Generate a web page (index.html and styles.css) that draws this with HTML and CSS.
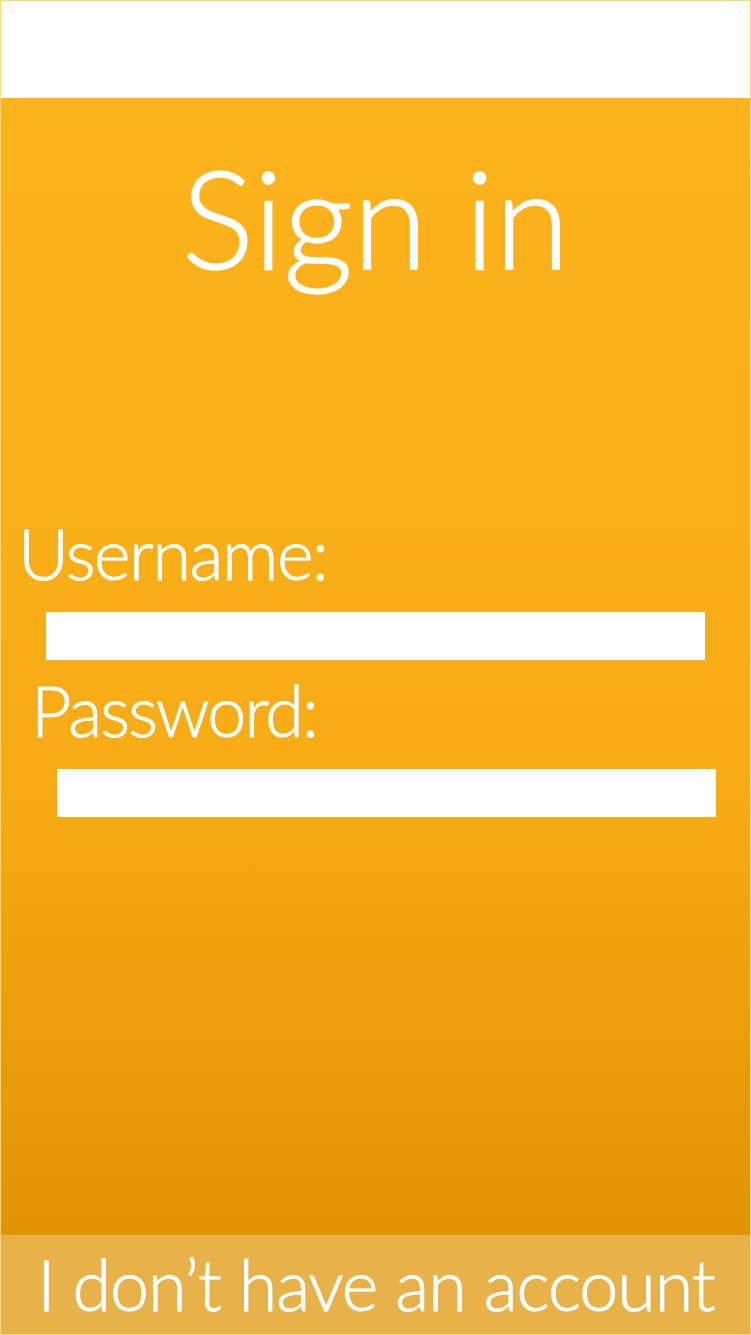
FILE: index.html
```html
<!DOCTYPE html>
<html lang="en">
<head>
<meta charset="utf-8">
<title>Sign in</title>
<link rel="stylesheet" href="styles.css">
</head>
<body>
<div class="frame">
  <header class="topbar"></header>
  <main class="panel">
    <h1 class="title">Sign in</h1>
    <form class="form">
      <label class="label label-user" for="user">Username:</label>
      <input class="field field-user" id="user" type="text">
      <label class="label label-pass" for="pass">Password:</label>
      <input class="field field-pass" id="pass" type="password">
    </form>
  </main>
  <footer class="footer">I don’t have an account</footer>
</div>
</body>
</html>
```

FILE: styles.css
```css
html, body {
  margin: 0;
  padding: 0;
  background: #ffffff;
}

.frame {
  box-sizing: border-box;
  width: 751px;
  height: 1335px;
  border: 1px solid #fdd67c;
  display: flex;
  flex-direction: column;
  font-family: "Lato", "Open Sans", sans-serif;
  font-weight: 300;
  color: #ffffff;
}

.topbar {
  height: 97px;
  background: #ffffff;
  flex: none;
}

.panel {
  flex: 1;
  display: flex;
  flex-direction: column;
  background: linear-gradient(to bottom, #fdb31b 0%, #f7ac16 60%, #e09400 100%);
}

.title {
  margin: 0;
  padding-top: 51px;
  font-size: 136px;
  line-height: 136px;
  font-weight: 300;
  text-align: center;
  -webkit-text-stroke: 1.4px #ffffff;
}

.form {
  display: flex;
  flex-direction: column;
  align-items: flex-start;
  padding-top: 233px;
}

.label {
  font-size: 70px;
  line-height: 70px;
  -webkit-text-stroke: 0.9px #ffffff;
}

.label-user {
  margin-left: 17px;
  letter-spacing: -1.4px;
}

.label-pass {
  margin-left: 30px;
  margin-top: 15px;
  letter-spacing: -1.9px;
}

.field {
  box-sizing: border-box;
  width: 659px;
  height: 48px;
  margin-top: 24px;
  border: 0;
  padding: 0;
  background: #ffffff;
  outline: none;
}

.field-user {
  margin-left: 45px;
}

.field-pass {
  margin-left: 56px;
}

.footer {
  flex: none;
  height: 99px;
  background: #e8b24a;
  font-size: 70px;
  line-height: 99px;
  text-align: center;
  letter-spacing: -1px;
  padding-left: 1px;
  -webkit-text-stroke: 0.9px #ffffff;
}
```
